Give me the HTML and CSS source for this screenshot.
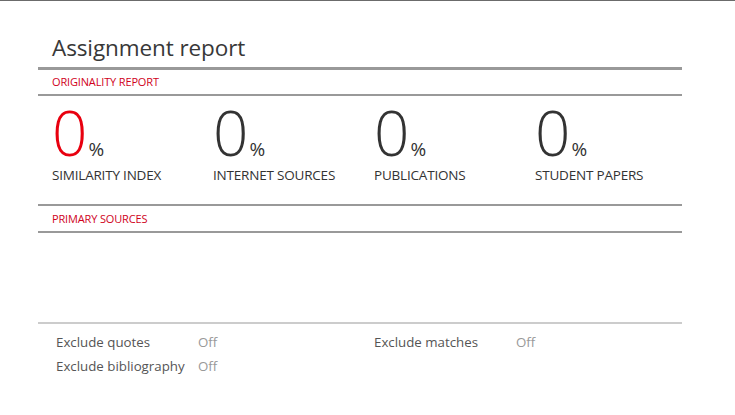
FILE: index.html
```html
<!DOCTYPE html>
<html>
<head>
<meta charset="utf-8">
<link rel="stylesheet" href="styles.css">
</head>
<body>
<div class="page">
  <div class="report">
    <h1 class="title">Assignment report</h1>
    <div class="section-head">ORIGINALITY REPORT</div>
    <div class="stats">
      <div class="stat">
        <div class="num red">0<span class="pct">%</span></div>
        <div class="label">SIMILARITY INDEX</div>
      </div>
      <div class="stat">
        <div class="num">0<span class="pct">%</span></div>
        <div class="label">INTERNET SOURCES</div>
      </div>
      <div class="stat">
        <div class="num">0<span class="pct">%</span></div>
        <div class="label">PUBLICATIONS</div>
      </div>
      <div class="stat">
        <div class="num">0<span class="pct">%</span></div>
        <div class="label">STUDENT PAPERS</div>
      </div>
    </div>
    <div class="section-head primary">PRIMARY SOURCES</div>
    <div class="sources"></div>
    <div class="excludes">
      <div class="ex-col">
        <div class="ex-row"><span class="ex-name">Exclude quotes</span><span class="ex-val">Off</span></div>
        <div class="ex-row"><span class="ex-name">Exclude bibliography</span><span class="ex-val">Off</span></div>
      </div>
      <div class="ex-col">
        <div class="ex-row"><span class="ex-name">Exclude matches</span><span class="ex-val">Off</span></div>
      </div>
    </div>
  </div>
</div>
</body>
</html>
```

FILE: styles.css
```css
html, body {
  margin: 0;
  padding: 0;
  background: #fff;
}
body {
  font-family: "Open Sans", "Noto Sans", sans-serif;
  color: #333;
}
.page {
  border-top: 1px solid #6b6b6b;
  padding-left: 38px;
}
.report {
  width: 644px;
}
.title {
  margin: 0;
  padding: 31px 0 0 14px;
  height: 35px;
  font-size: 22.5px;
  font-weight: 400;
  line-height: 32px;
  color: #383838;
  letter-spacing: -0.1px;
}
.section-head {
  border-top: 3px solid #999;
  border-bottom: 2px solid #999;
  height: 24px;
  line-height: 24px;
  padding-left: 14px;
  font-size: 11px;
  color: #d0021b;
  letter-spacing: -0.15px;
}
.stats {
  display: flex;
  padding: 5px 0 0 14px;
  height: 103px;
}
.stat {
  width: 161px;
  flex-shrink: 0;
}
.num {
  font-size: 62px;
  font-weight: 300;
  line-height: 62px;
  color: #333;
  letter-spacing: -2px;
}
.num.red {
  color: #e8000f;
}
.pct {
  font-size: 19px;
  font-weight: 400;
  line-height: 1;
  color: #333;
  letter-spacing: 0;
  margin-left: 3px;
}
.label {
  font-size: 13.5px;
  line-height: 16px;
  margin-top: 4px;
  color: #333;
  letter-spacing: -0.2px;
}
.section-head.primary {
  border-top: 2px solid #999;
  height: 25px;
  line-height: 26px;
}
.sources {
  height: 89px;
  border-bottom: 2px solid #ccc;
}
.excludes {
  display: flex;
  padding: 6px 0 0 18px;
}
.ex-col {
  width: 318px;
  flex-shrink: 0;
}
.ex-row {
  display: flex;
  font-size: 13.3px;
  line-height: 24px;
  color: #555;
}
.ex-name {
  width: 142px;
  flex-shrink: 0;
}
.ex-val {
  color: #999;
}
```
